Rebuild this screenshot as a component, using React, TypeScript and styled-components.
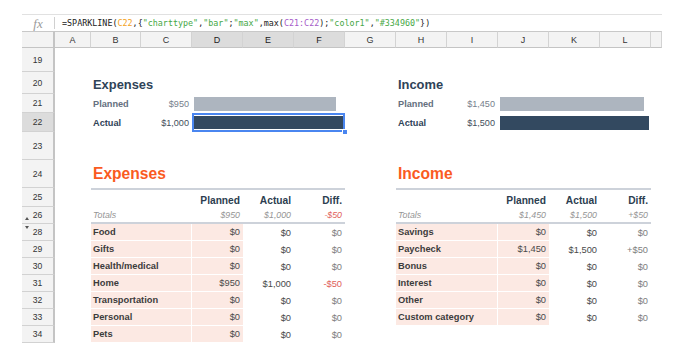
import React from 'react';
import styled, { createGlobalStyle, css } from 'styled-components';

const GlobalStyle = createGlobalStyle`
  html, body {
    margin: 0;
    padding: 0;
    background: #fff;
  }
  body {
    font-family: 'Liberation Sans', Arial, sans-serif;
  }
`;

const COLUMNS = ['A', 'B', 'C', 'D', 'E', 'F', 'G', 'H', 'I', 'J', 'K', 'L', ''];
const ROWS = [19, 20, 21, 22, 23, 24, 25, 26, 28, 29, 30, 31, 32, 33, 34];
const SELECTED_COLS = ['D', 'E', 'F'];
const SELECTED_ROW = 22;

// grid line helpers: column 1 / row 1 hold the headers
const col = (letter: string, offset = 0) => COLUMNS.indexOf(letter) + 2 + offset;
const row = (n: number) => ROWS.indexOf(n) + 2;

type Line = { name: string; planned: string; actual: string; diff: string };

const expenses: Line[] = [
  { name: 'Food', planned: '$0', actual: '$0', diff: '$0' },
  { name: 'Gifts', planned: '$0', actual: '$0', diff: '$0' },
  { name: 'Health/medical', planned: '$0', actual: '$0', diff: '$0' },
  { name: 'Home', planned: '$950', actual: '$1,000', diff: '-$50' },
  { name: 'Transportation', planned: '$0', actual: '$0', diff: '$0' },
  { name: 'Personal', planned: '$0', actual: '$0', diff: '$0' },
  { name: 'Pets', planned: '$0', actual: '$0', diff: '$0' },
];

const income: Line[] = [
  { name: 'Savings', planned: '$0', actual: '$0', diff: '$0' },
  { name: 'Paycheck', planned: '$1,450', actual: '$1,500', diff: '+$50' },
  { name: 'Bonus', planned: '$0', actual: '$0', diff: '$0' },
  { name: 'Interest', planned: '$0', actual: '$0', diff: '$0' },
  { name: 'Other', planned: '$0', actual: '$0', diff: '$0' },
  { name: 'Custom category', planned: '$0', actual: '$0', diff: '$0' },
];

const Summary: React.FC<{
  title: string;
  start: string;
  planned: number;
  actual: number;
  selectActual?: boolean;
}> = ({ title, start, planned, actual, selectActual }) => {
  const max = Math.max(planned, actual);
  const money = (v: number) => '$' + v.toLocaleString('en-US');
  return (
    <>
      <Cell $row={row(20)} $col={col(start)} $span={2}>
        <SummaryTitle>{title}</SummaryTitle>
      </Cell>
      <Cell $row={row(21)} $col={col(start)}>
        <SummaryLabel $strong={false}>Planned</SummaryLabel>
      </Cell>
      <Cell $row={row(21)} $col={col(start, 1)} $align="right">
        <SummaryAmount $strong={false}>{money(planned)}</SummaryAmount>
      </Cell>
      <SparkCell $row={row(21)} $col={col(start, 2)} $span={3}>
        <Bar $color="#adb5bf" style={{ width: `${(planned / max) * 100}%` }} />
      </SparkCell>
      <Cell $row={row(22)} $col={col(start)}>
        <SummaryLabel $strong>Actual</SummaryLabel>
      </Cell>
      <Cell $row={row(22)} $col={col(start, 1)} $align="right">
        <SummaryAmount $strong>{money(actual)}</SummaryAmount>
      </Cell>
      <SparkCell
        $row={row(22)}
        $col={col(start, 2)}
        $span={3}
        $selected={selectActual}
      >
        <Bar $color="#334960" style={{ width: `${(actual / max) * 100}%` }} />
      </SparkCell>
    </>
  );
};

const BudgetTable: React.FC<{
  title: string;
  start: string;
  totals: [string, string, string];
  lines: Line[];
}> = ({ title, start, totals, lines }) => (
  <>
    <Cell $row={row(24)} $col={col(start)} $span={3}>
      <SectionTitle>{title}</SectionTitle>
    </Cell>

    <HeadCell $row={row(25)} $col={col(start)} $span={2} />
    {['Planned', 'Actual', 'Diff.'].map((h, i) => (
      <HeadCell key={h} $row={row(25)} $col={col(start, 2 + i)} $align="right">
        <ColHeading>{h}</ColHeading>
      </HeadCell>
    ))}

    <TotalsCell $row={row(26)} $col={col(start)} $span={2}>
      <TotalsText $negative={false}>Totals</TotalsText>
    </TotalsCell>
    {totals.map((t, i) => (
      <TotalsCell key={i} $row={row(26)} $col={col(start, 2 + i)} $align="right">
        <TotalsText $negative={t.startsWith('-')}>{t}</TotalsText>
      </TotalsCell>
    ))}

    {lines.map((line, i) => {
      const r = row(28 + i);
      return (
        <React.Fragment key={line.name}>
          <CategoryCell $row={r} $col={col(start)} $span={2}>
            <CategoryText>{line.name}</CategoryText>
          </CategoryCell>
          <PlannedCell $row={r} $col={col(start, 2)} $align="right">
            <ValueText $tone="main">{line.planned}</ValueText>
          </PlannedCell>
          <Cell $row={r} $col={col(start, 3)} $align="right">
            <ValueText $tone="main">{line.actual}</ValueText>
          </Cell>
          <Cell $row={r} $col={col(start, 4)} $align="right">
            <ValueText $tone={line.diff.startsWith('-') ? 'negative' : 'muted'}>
              {line.diff}
            </ValueText>
          </Cell>
        </React.Fragment>
      );
    })}
  </>
);

const App: React.FC = () => (
  <>
    <GlobalStyle />
    <Page>
      <FormulaBar>
        <FxBox>
          <Fx>fx</Fx>
        </FxBox>
        <FxDivider />
        <Formula>
          =SPARKLINE(<Ref $kind="a">C22</Ref>,{'{'}
          <Str>"charttype"</Str>,<Str>"bar"</Str>;<Str>"max"</Str>,max(
          <Ref $kind="b">C21:C22</Ref>);<Str>"color1"</Str>,<Str>"#334960"</Str>
          {'})'}
        </Formula>
      </FormulaBar>

      <Sheet>
        <Corner />
        {COLUMNS.map((c, i) => (
          <ColHead key={i} $selected={SELECTED_COLS.includes(c)}>
            {c}
          </ColHead>
        ))}

        {ROWS.map(n => (
          <RowHead key={n} $row={row(n)} $selected={n === SELECTED_ROW}>
            {n === 26 && <HiddenMarker $dir="up" />}
            {n === 28 && <HiddenMarker $dir="down" />}
            {n}
          </RowHead>
        ))}

        <Summary title="Expenses" start="B" planned={950} actual={1000} selectActual />
        <Summary title="Income" start="H" planned={1450} actual={1500} />

        <BudgetTable
          title="Expenses"
          start="B"
          totals={['$950', '$1,000', '-$50']}
          lines={expenses}
        />
        <BudgetTable
          title="Income"
          start="H"
          totals={['$1,450', '$1,500', '+$50']}
          lines={income}
        />
      </Sheet>
    </Page>
  </>
);

const Page = styled.div`
  padding: 14px 0 0 22px;
  width: 640px;
`;

const FormulaBar = styled.div`
  display: flex;
  align-items: center;
  height: 17px;
  border-top: 1px solid #e1e1e1;
  box-sizing: border-box;
`;

const FxBox = styled.div`
  width: 32px;
  display: flex;
  justify-content: center;
`;

const Fx = styled.span`
  font-family: 'Liberation Serif', 'Times New Roman', serif;
  font-style: italic;
  font-size: 13px;
  color: #9a9a9a;
  line-height: 1;
`;

const FxDivider = styled.div`
  width: 1px;
  height: 12px;
  background: #d0d0d0;
`;

const Formula = styled.div`
  padding-left: 7px;
  font-family: 'DejaVu Sans Mono', 'Liberation Mono', monospace;
  font-size: 8.4px;
  color: #1a1a1a;
  white-space: nowrap;
`;

const Ref = styled.span<{ $kind: 'a' | 'b' }>`
  color: ${p => (p.$kind === 'a' ? '#f4a21b' : '#a65bc9')};
`;

const Str = styled.span`
  color: #46a846;
`;

const Sheet = styled.div`
  display: grid;
  grid-template-columns: 33px 36px 50px repeat(10, 51px) 11px;
  grid-template-rows: 17px 24px 22px 19px 19px 28px 28px 19px repeat(8, 17px);
  font-family: 'Liberation Sans', Arial, sans-serif;
`;

const headBase = css`
  background: #f3f3f3;
  box-sizing: border-box;
  color: #333;
  font-size: 9px;
  display: flex;
  align-items: center;
  justify-content: center;
`;

const Corner = styled.div`
  ${headBase};
  grid-row: 1;
  grid-column: 1;
  border-top: 1px solid #c8c8c8;
  border-bottom: 1px solid #c4c4c4;
  border-right: 2px solid #c4c4c4;
`;

const ColHead = styled.div<{ $selected: boolean }>`
  ${headBase};
  grid-row: 1;
  border-top: 1px solid #c8c8c8;
  border-bottom: 1px solid #c4c4c4;
  border-right: 1px solid #d3d3d3;
  background: ${p => (p.$selected ? '#dcdcdc' : '#f3f3f3')};
  color: ${p => (p.$selected ? '#222' : '#333')};
`;

const RowHead = styled.div<{ $row: number; $selected: boolean }>`
  ${headBase};
  grid-row: ${p => p.$row};
  grid-column: 1;
  position: relative;
  font-size: 8.6px;
  border-bottom: 1px solid #d2d2d2;
  border-right: 2px solid #c4c4c4;
  background: ${p => (p.$selected ? '#dcdcdc' : '#f3f3f3')};
`;

const HiddenMarker = styled.span<{ $dir: 'up' | 'down' }>`
  position: absolute;
  left: 3px;
  width: 0;
  height: 0;
  border-left: 2.5px solid transparent;
  border-right: 2.5px solid transparent;
  ${p =>
    p.$dir === 'up'
      ? css`
          bottom: 3px;
          border-bottom: 3px solid #555;
        `
      : css`
          top: 2px;
          border-top: 3px solid #555;
        `}
`;

const Cell = styled.div<{
  $row: number;
  $col: number;
  $span?: number;
  $align?: 'left' | 'right';
}>`
  grid-row: ${p => p.$row};
  grid-column: ${p => p.$col} / span ${p => p.$span ?? 1};
  display: flex;
  align-items: center;
  justify-content: ${p => (p.$align === 'right' ? 'flex-end' : 'flex-start')};
  padding: 0 3px 0 2px;
  box-sizing: border-box;
  min-width: 0;
  white-space: nowrap;
`;

const SparkCell = styled(Cell)<{ $selected?: boolean }>`
  position: relative;
  align-items: stretch;
  padding: 3px 2px 2px 2px;
  ${p =>
    p.$selected &&
    css`
      padding: 3px 2px 3px 2px;
      box-shadow: inset 0 0 0 2px #4a86f0;
      &::after {
        content: '';
        position: absolute;
        right: -3px;
        bottom: -3px;
        width: 4px;
        height: 4px;
        background: #4a86f0;
        border: 1px solid #fff;
      }
    `}
`;

const Bar = styled.div<{ $color: string }>`
  background: ${p => p.$color};
  height: 100%;
`;

const HeadCell = styled(Cell)`
  border-top: 2px solid #cdd2da;
  padding-top: 4px;
`;

const TotalsCell = styled(Cell)`
  border-bottom: 2px solid #cdd2da;
`;

const CategoryCell = styled(Cell)`
  background: #fce9e3;
  border-right: 1px solid #fff;
  border-bottom: 1px solid #fff;
`;

const PlannedCell = styled(Cell)`
  background: #fce9e3;
  border-bottom: 1px solid #fff;
`;

const SummaryTitle = styled.span`
  font-size: 12.9px;
  font-weight: bold;
  color: #2f4358;
  padding-top: 2px;
`;

const SummaryLabel = styled.span<{ $strong: boolean }>`
  font-size: 9.2px;
  font-weight: bold;
  color: ${p => (p.$strong ? '#2f4358' : '#65707e')};
`;

const SummaryAmount = styled.span<{ $strong: boolean }>`
  font-size: 9.1px;
  color: ${p => (p.$strong ? '#434e5b' : '#76808c')};
`;

const SectionTitle = styled.span`
  font-size: 15.6px;
  font-weight: bold;
  color: #fa5b1f;
`;

const ColHeading = styled.span`
  font-size: 10.2px;
  font-weight: bold;
  color: #2c3e50;
`;

const TotalsText = styled.span<{ $negative: boolean }>`
  font-size: 8.8px;
  font-style: italic;
  color: ${p => (p.$negative ? '#e0605a' : '#959595')};
`;

const CategoryText = styled.span`
  font-size: 9.3px;
  font-weight: bold;
  color: #3c3c3c;
`;

const ValueText = styled.span<{ $tone: 'main' | 'muted' | 'negative' }>`
  font-size: 9.3px;
  color: ${p =>
    p.$tone === 'negative' ? '#e0605a' : p.$tone === 'muted' ? '#7e7e7e' : '#4a4a4a'};
`;

export default App;
